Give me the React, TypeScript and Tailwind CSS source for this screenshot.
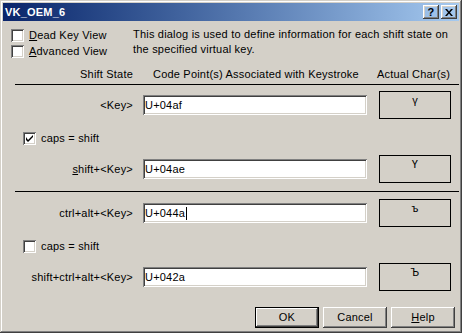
import type { ReactNode } from "react";

const raised =
  "shadow-[inset_-1px_-1px_#404040,inset_1px_1px_#ffffff,inset_-2px_-2px_#808080,inset_2px_2px_#d4d0c8]";
const sunken =
  "shadow-[inset_1px_1px_#808080,inset_-1px_-1px_#ffffff,inset_2px_2px_#404040,inset_-2px_-2px_#d4d0c8]";

function CheckBox({ checked = false }: { checked?: boolean }) {
  return (
    <div className={`flex h-[13px] w-[13px] shrink-0 items-center justify-center bg-white ${sunken}`}>
      {checked && (
        <svg width="7" height="7" viewBox="0 0 7 7">
          <path d="M0 2 L0 5 L2 7 L7 2 L7 0 L2 5 Z" fill="#000" />
        </svg>
      )}
    </div>
  );
}

function CheckRow({ label }: { label: ReactNode }) {
  return (
    <div className="flex h-[16px] items-center gap-[5px]">
      <CheckBox />
      <span>{label}</span>
    </div>
  );
}

function KeyRow({
  label,
  code,
  ch,
  caret = false,
}: {
  label: ReactNode;
  code: string;
  ch: string;
  caret?: boolean;
}) {
  return (
    <div className="flex h-[28px] items-center">
      <div className="w-[130px] text-right">{label}</div>
      <div className={`ml-[10px] flex h-[20px] w-[224px] items-center bg-white pl-[2px] ${sunken}`}>
        <span>{code}</span>
        {caret && <span className="ml-[1px] h-[13px] w-[1px] bg-black" />}
      </div>
      <div className="ml-[12px] h-[28px] w-[72px] border border-black pt-[1px] text-center leading-[14px]">
        {ch}
      </div>
    </div>
  );
}

function CapsRow({ checked }: { checked: boolean }) {
  return (
    <div className="flex h-[36px] items-center gap-[5px] pl-[20px] pt-[2px]">
      <CheckBox checked={checked} />
      <span>caps = shift</span>
    </div>
  );
}

function DlgButton({ children, isDefault = false }: { children: ReactNode; isDefault?: boolean }) {
  if (isDefault) {
    return (
      <div className="h-[21px] w-[64px] border border-black">
        <div className={`flex h-full w-full items-center justify-center ${raised}`}>{children}</div>
      </div>
    );
  }
  return (
    <div className={`flex h-[21px] w-[64px] items-center justify-center ${raised}`}>{children}</div>
  );
}

export default function App() {
  return (
    <div
      className="h-[333px] w-[462px] bg-[#d4d0c8] p-[3px] text-[11px] leading-[13px] tracking-[0.2px] text-black shadow-[inset_-1px_-1px_#404040,inset_1px_1px_#d4d0c8,inset_-2px_-2px_#808080,inset_2px_2px_#ffffff]"
      style={{ fontFamily: '"Liberation Sans", Arial, sans-serif' }}
    >
      {/* title bar */}
      <div className="flex h-[18px] items-center bg-gradient-to-r from-[#0a246a] to-[#a6caf0] pl-[2px] pr-[2px]">
        <span className="font-bold text-white">VK_OEM_6</span>
        <div className="ml-auto flex gap-[2px]">
          <div className={`flex h-[14px] w-[16px] items-center justify-center text-[11px] font-bold ${raised}`}>
            ?
          </div>
          <div className={`flex h-[14px] w-[16px] items-center justify-center ${raised}`}>
            <svg width="8" height="7" viewBox="0 0 8 7">
              <path d="M0 0h2l2 2.5L6 0h2L5 3.5 8 7H6L4 4.5 2 7H0l3-3.5z" fill="#000" />
            </svg>
          </div>
        </div>
      </div>

      {/* options + description */}
      <div className="mt-[6px] flex">
        <div className="ml-[8px] w-[122px]">
          <CheckRow label={<><u>D</u>ead Key View</>} />
          <CheckRow label={<><u>A</u>dvanced View</>} />
        </div>
        <p className="w-[322px] leading-[15px]">
          This dialog is used to define information for each shift state on the specified virtual key.
        </p>
      </div>

      {/* column headers */}
      <div className="mt-[8px] flex h-[14px] items-center">
        <div className="w-[130px] text-right">Shift State</div>
        <div className="ml-[20px] w-[210px]">Code Point(s) Associated with Keystroke</div>
        <div className="ml-[14px]">Actual Char(s)</div>
      </div>
      <div className="ml-[12px] mt-[3px] h-px bg-black" />

      <div className="mt-[6px]">
        <KeyRow label="<Key>" code="U+04af" ch="ү" />
        <CapsRow checked />
        <KeyRow label={<><u>s</u>hift+&lt;Key&gt;</>} code="U+04ae" ch="Ү" />
      </div>
      <div className="ml-[12px] mt-[8px] h-px bg-black" />

      <div className="mt-[7px]">
        <KeyRow label="ctrl+alt+<Key>" code="U+044a" ch="ъ" caret />
        <CapsRow checked={false} />
        <KeyRow label="shift+ctrl+alt+<Key>" code="U+042a" ch="Ъ" />
      </div>

      {/* buttons */}
      <div className="mr-[4px] mt-[16px] flex justify-end gap-[4px]">
        <DlgButton isDefault>OK</DlgButton>
        <DlgButton>Cancel</DlgButton>
        <DlgButton>
          <span>
            <u>H</u>elp
          </span>
        </DlgButton>
      </div>
    </div>
  );
}
